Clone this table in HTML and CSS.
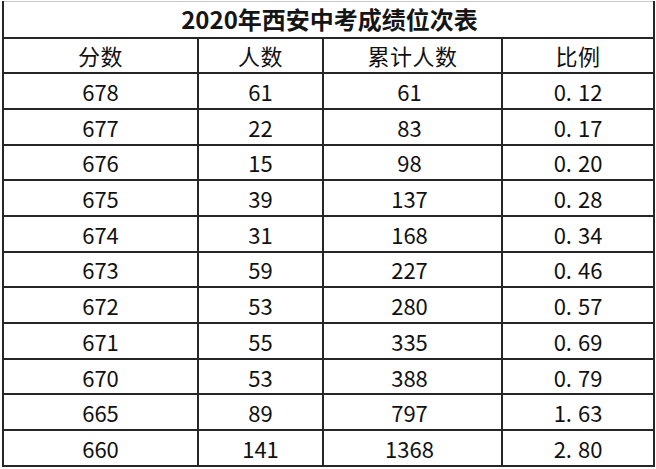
FILE: index.html
```html
<!DOCTYPE html>
<html lang="zh-CN">
<head>
<meta charset="utf-8">
<title>2020年西安中考成绩位次表</title>
<link rel="stylesheet" href="styles.css">
</head>
<body>
<table class="rank">
  <colgroup>
    <col class="c1"><col class="c2"><col class="c3"><col class="c4">
  </colgroup>
  <thead>
    <tr class="title-row"><th colspan="4" class="title">2020年西安中考成绩位次表</th></tr>
    <tr class="head-row"><th>分数</th><th>人数</th><th>累计人数</th><th>比例</th></tr>
  </thead>
  <tbody>
    <tr><td>678</td><td>61</td><td class="cum">61</td><td>0<span class="dot">.</span>12</td></tr>
    <tr><td>677</td><td>22</td><td class="cum">83</td><td>0<span class="dot">.</span>17</td></tr>
    <tr><td>676</td><td>15</td><td class="cum">98</td><td>0<span class="dot">.</span>20</td></tr>
    <tr><td>675</td><td>39</td><td class="cum">137</td><td>0<span class="dot">.</span>28</td></tr>
    <tr><td>674</td><td>31</td><td class="cum">168</td><td>0<span class="dot">.</span>34</td></tr>
    <tr><td>673</td><td>59</td><td class="cum">227</td><td>0<span class="dot">.</span>46</td></tr>
    <tr><td>672</td><td>53</td><td class="cum">280</td><td>0<span class="dot">.</span>57</td></tr>
    <tr><td>671</td><td>55</td><td class="cum">335</td><td>0<span class="dot">.</span>69</td></tr>
    <tr><td>670</td><td>53</td><td class="cum">388</td><td>0<span class="dot">.</span>79</td></tr>
    <tr><td>665</td><td>89</td><td class="cum">797</td><td>1<span class="dot">.</span>63</td></tr>
    <tr><td>660</td><td>141</td><td class="cum">1368</td><td>2<span class="dot">.</span>80</td></tr>
  </tbody>
</table>
</body>
</html>
```

FILE: styles.css
```css
html, body {
  margin: 0;
  padding: 0;
  background: #ffffff;
}

body {
  padding: 1px 0 0 2px;
  font-family: "Noto Sans CJK SC", "Noto Sans", sans-serif;
  color: #111111;
}

.rank {
  border-collapse: collapse;
  table-layout: fixed;
  width: 651px;
  border-left: 2px solid #222222;
  border-right: 2px solid #222222;
}

.c1 { width: 195px; }
.c2 { width: 125px; }
.c3 { width: 179px; }
.c4 { width: 152px; }

.rank th,
.rank td {
  border: 2px solid #262626;
  padding: 0;
  text-align: center;
  vertical-align: middle;
  font-size: 22px;
  font-weight: 400;
  line-height: 1;
  height: 33.7px;
}

.rank .title-row .title {
  border-top: 1px solid #c8c8c8;
  font-size: 24px;
  font-weight: 700;
  height: 34.5px;
  color: #151515;
  padding-left: 2px;
}

.rank .head-row th {
  font-size: 22px;
  letter-spacing: 0.5px;
}

.rank .cum {
  padding-right: 6px;
}

.dot {
  margin-right: 6px;
}
```
